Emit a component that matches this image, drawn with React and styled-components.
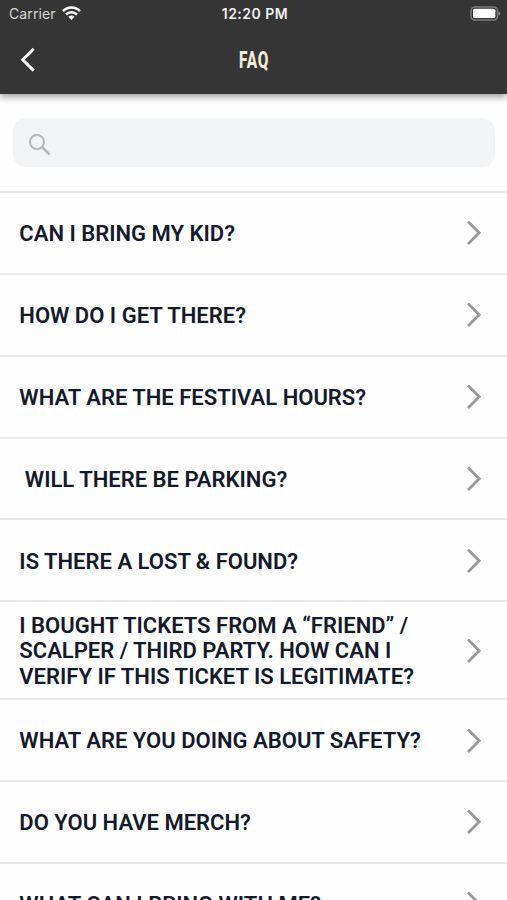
import styled, { createGlobalStyle } from "styled-components"

const GlobalStyle = createGlobalStyle`
  * {
    box-sizing: border-box;
  }
  body {
    margin: 0;
    background: #fefefe;
    overflow: hidden;
  }
`

const Screen = styled.div`
  display: flex;
  flex-direction: column;
  height: 900px;
  overflow: hidden;
  font-family: Roboto, "Liberation Sans", sans-serif;
`

const Header = styled.header`
  flex: none;
  height: 94px;
  background: #353535;
  box-shadow: 0 3px 7px rgba(0, 0, 0, 0.38);
`

const StatusBar = styled.div`
  display: grid;
  grid-template-columns: 1fr auto 1fr;
  align-items: center;
  height: 27px;
  padding: 0 6px 0 9px;
  font-family: Inter, sans-serif;
`

const Carrier = styled.div`
  display: flex;
  align-items: center;
  gap: 6px;
  color: #d8d8d8;
  font-size: 14px;
  letter-spacing: 0.1px;
`

const Time = styled.div`
  color: #f0f0f0;
  font-size: 14px;
  font-weight: 600;
  letter-spacing: 0.5px;
`

const Battery = styled.svg`
  justify-self: end;
`

const NavBar = styled.div`
  display: grid;
  grid-template-columns: 1fr auto 1fr;
  align-items: center;
  height: 66px;
  padding: 0 20px;
`

const BackButton = styled.button`
  display: flex;
  width: 18px;
  padding: 0;
  border: 0;
  background: none;
`

const Title = styled.h1`
  margin: 0;
  padding: 2px 0 0 2px;
  color: #f3ecda;
  font-size: 23px;
  font-weight: 800;
  line-height: 26px;
  letter-spacing: 1px;
  transform: scaleX(0.67);
`

const SearchArea = styled.div`
  flex: none;
  height: 97px;
  padding: 24px 12px 0 13px;
`

const SearchBox = styled.label`
  display: flex;
  align-items: center;
  height: 49px;
  padding: 5px 0 0 15px;
  border-radius: 13px;
  background: #f1f3f5;
`

const SearchInput = styled.input`
  flex: 1;
  border: 0;
  outline: 0;
  background: none;
  font: inherit;
`

const List = styled.ul`
  margin: 0;
  padding: 0;
  list-style: none;
`

const Row = styled.li`
  display: flex;
  align-items: center;
  justify-content: space-between;
  height: ${(props) => (props.$tall ? "97.8px" : "81.87px")};
  padding: 1px 25px 0 19.3px;
  border-top: 2px solid #e9e9e9;
`

const Question = styled.div`
  width: 420px;
  padding-top: 1px;
  padding-left: ${(props) => (props.$indent ? "5.5px" : "0")};
  color: #141a2c;
  font-size: 22.03px;
  font-weight: 600;
  line-height: 25.7px;
  white-space: pre-line;
`

const questions = [
  { text: "CAN I BRING MY KID?" },
  { text: "HOW DO I GET THERE?" },
  { text: "WHAT ARE THE FESTIVAL HOURS?" },
  { text: "WILL THERE BE PARKING?", indent: true },
  { text: "IS THERE A LOST & FOUND?" },
  {
    text: "I BOUGHT TICKETS FROM A “FRIEND” /\nSCALPER / THIRD PARTY. HOW CAN I\nVERIFY IF THIS TICKET IS LEGITIMATE?",
    tall: true,
  },
  { text: "WHAT ARE YOU DOING ABOUT SAFETY?" },
  { text: "DO YOU HAVE MERCH?" },
  { text: "WHAT CAN I BRING WITH ME?" },
]

function WifiIcon() {
  return (
    <svg width="19" height="15" viewBox="0 0 19 15" fill="none" stroke="#fff" strokeWidth="2.5">
      <path d="M1 5.1C5.7 0.4 13.3 0.4 18 5.1" />
      <path d="M4 8.5C7.2 5.4 11.8 5.4 15 8.5" />
      <path d="M6.4 10.8C8.2 9.1 10.8 9.1 12.6 10.8L9.5 14Z" fill="#fff" stroke="none" />
    </svg>
  )
}

function BatteryIcon() {
  return (
    <Battery width="31" height="15" viewBox="0 0 31 15">
      <rect x="1.1" y="0.9" width="26.4" height="13" rx="3.6" fill="none" stroke="#7b7b7b" strokeWidth="1.5" />
      <rect x="3" y="2.8" width="22.4" height="9.2" rx="1.5" fill="#fff" />
      <path d="M28.5 5.2C31 6 31 8.8 28.5 9.6Z" fill="#858585" />
    </Battery>
  )
}

function BackIcon() {
  return (
    <svg width="18" height="26" viewBox="0 0 18 26" fill="none" stroke="#fff" strokeWidth="3">
      <path d="M13.7 1.8L2.8 12.7L13.7 23.6" />
    </svg>
  )
}

function SearchIcon() {
  return (
    <svg width="24" height="24" viewBox="0 0 24 24" fill="none" stroke="#b5b7b8" strokeWidth="2">
      <circle cx="9" cy="9" r="7" />
      <path d="M14 14L21.5 21.5" strokeWidth="2.5" />
    </svg>
  )
}

function ChevronIcon() {
  return (
    <svg width="16" height="26" viewBox="0 0 16 26" fill="none" stroke="#999" strokeWidth="2.8">
      <path d="M2 1.6L13.2 12.8L2 24" />
    </svg>
  )
}

function App() {
  return (
    <>
      <GlobalStyle />
      <Screen>
        <Header>
          <StatusBar>
            <Carrier>
              Carrier
              <WifiIcon />
            </Carrier>
            <Time>12:20 PM</Time>
            <BatteryIcon />
          </StatusBar>
          <NavBar>
            <BackButton aria-label="Back">
              <BackIcon />
            </BackButton>
            <Title>FAQ</Title>
          </NavBar>
        </Header>
        <SearchArea>
          <SearchBox>
            <SearchIcon />
            <SearchInput aria-label="Search" />
          </SearchBox>
        </SearchArea>
        <List>
          {questions.map((question) => (
            <Row key={question.text} $tall={question.tall}>
              <Question $indent={question.indent}>{question.text}</Question>
              <ChevronIcon />
            </Row>
          ))}
        </List>
      </Screen>
    </>
  )
}

export default App
